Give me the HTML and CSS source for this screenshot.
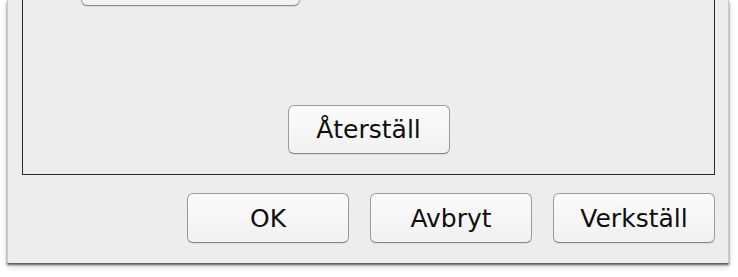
FILE: index.html
```html
<!DOCTYPE html>
<html lang="sv">
<head>
<meta charset="utf-8">
<link rel="stylesheet" href="styles.css">
</head>
<body>
<div class="window">
  <div class="panel">
    <button class="btn btn-top" type="button" aria-hidden="true"></button>
    <button class="btn btn-reset" type="button">Återställ</button>
  </div>
  <div class="actions">
    <button class="btn" type="button">OK</button>
    <button class="btn" type="button">Avbryt</button>
    <button class="btn" type="button">Verkställ</button>
  </div>
</div>
</body>
</html>
```
FILE: styles.css
```css
html, body {
  margin: 0;
  padding: 0;
  background: #ffffff;
}
body {
  width: 738px;
  height: 277px;
  overflow: hidden;
  font-family: "DejaVu Sans", "Liberation Sans", sans-serif;
}
.window {
  box-sizing: border-box;
  margin-left: 7px;
  width: 722px;
  height: 263px;
  background: #ededed;
  border-left: 1px solid #cdcdcd;
  border-right: 1px solid #cdcdcd;
  box-shadow: 0 2px 2px rgba(0, 0, 0, 0.6), 0 4px 6px rgba(0, 0, 0, 0.15);
  display: flex;
  flex-direction: column;
}
.panel {
  box-sizing: border-box;
  margin: -20px 13px 0 14px;
  height: 195px;
  border: 1px solid #2a2a2a;
  display: flex;
  flex-direction: column;
  align-items: flex-start;
}
.btn {
  box-sizing: border-box;
  width: 162px;
  height: 50px;
  padding: 0;
  border: 1px solid #9c9c9c;
  border-bottom-color: #888888;
  border-radius: 6px;
  background: linear-gradient(#fbfbfb, #f1f1f1);
  box-shadow: 0 1px 1px rgba(0, 0, 0, 0.08);
  font-family: "DejaVu Sans", "Liberation Sans", sans-serif;
  font-size: 25px;
  color: #0e0e0e;
  display: flex;
  align-items: center;
  justify-content: center;
}
.btn-top {
  width: 219px;
  height: 25px;
  margin-left: 58px;
  border-top: none;
  border-radius: 0 0 6px 6px;
}
.btn-reset {
  margin-top: auto;
  margin-bottom: 20px;
  align-self: center;
  height: 49px;
}
.actions {
  display: flex;
  justify-content: flex-end;
  gap: 21px;
  margin-top: 18px;
  padding-right: 13px;
}
```
